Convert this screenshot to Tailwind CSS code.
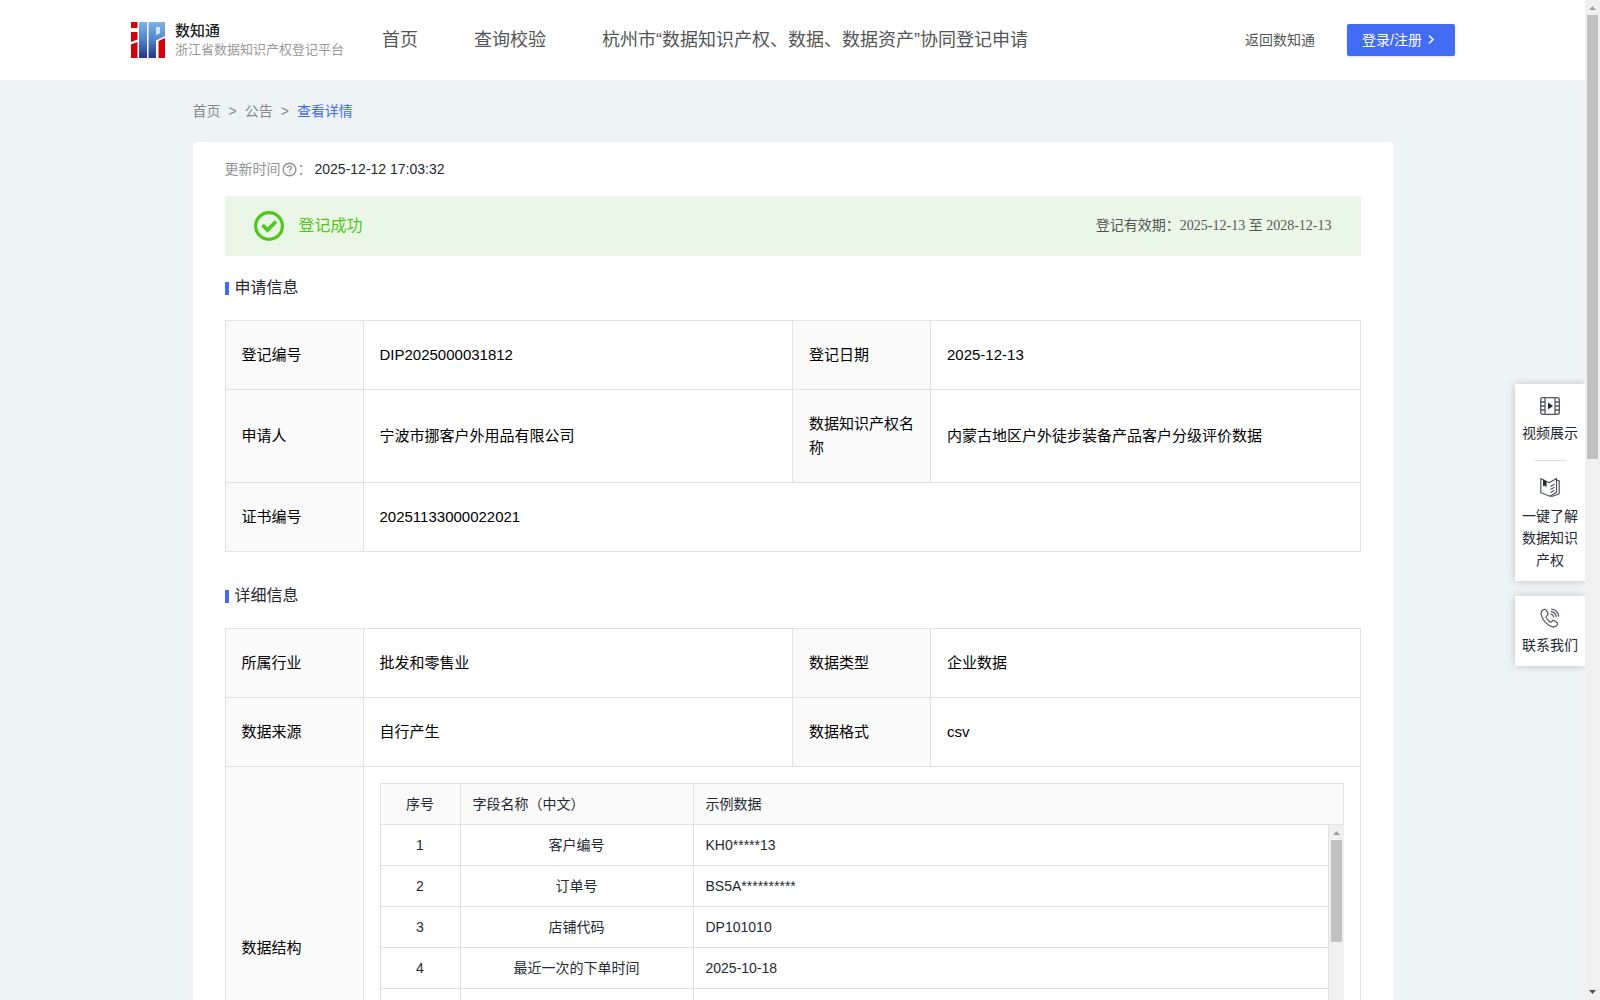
<!DOCTYPE html>
<html lang="zh-CN">
<head>
<meta charset="utf-8"/>
<meta content="width=device-width, initial-scale=1.0" name="viewport"/>
<title>数知通 - 查看详情</title>
<script src="https://cdn.jsdelivr.net/npm/@tailwindcss/browser@4"></script>
</head>
<body class="flex h-screen overflow-hidden bg-[#eef3f6] font-['Liberation_Sans','Noto_Sans_CJK_SC',sans-serif] text-sm text-[#252933]">

<div class="relative min-w-0 flex-1 overflow-hidden">
  <!-- Header -->
  <header class="flex h-20 items-center bg-white pr-[130px] pl-[131px] text-[#555]">
    <a href="#" class="flex items-center gap-2.5">
      <svg class="h-9 w-[34px]" viewBox="0 0 34 36">
        <defs>
          <linearGradient id="blue" x1="0" y1="0" x2="0" y2="1">
            <stop offset="0" stop-color="#7fb2e8"/>
            <stop offset=".5" stop-color="#4f82c6"/>
            <stop offset="1" stop-color="#23348a"/>
          </linearGradient>
          <linearGradient id="bowl" x1="0" y1="0" x2="0" y2="1">
            <stop offset="0" stop-color="#7fb2e8"/>
            <stop offset="1" stop-color="#5585c8"/>
          </linearGradient>
        </defs>
        <path d="M0 0h6.500v6H0zM0 10h6.500v7.500L0 20zM0 22.500l6.500-2.500v16H0zM27.500 19l6.500-3v20h-6.500z" fill="#d0000d"/>
        <path d="M8 0h8v36H8zM17.500 0H25v36h-7.500z" fill="url(#blue)"/>
        <path d="M24 0h10v14l-10 5v-6l5-2V5h-5z" fill="url(#bowl)"/>
        <path d="M25 5h4v6l-4 2z" fill="#d6e5f6"/>
      </svg>
      <span class="flex flex-col">
        <span class="text-[15px] leading-5 font-medium text-[#222]">数知通</span>
        <span class="text-[13px] leading-[18px] text-[#999]">浙江省数据知识产权登记平台</span>
      </span>
    </a>
    <nav class="ml-[38px] flex flex-1 gap-14 text-lg whitespace-nowrap">
      <a href="#">首页</a>
      <a href="#">查询校验</a>
      <a href="#">杭州市“数据知识产权、数据、数据资产”协同登记申请</a>
    </nav>
    <a href="#" class="mr-8 whitespace-nowrap">返回数知通</a>
    <button class="flex h-8 w-[108px] items-center gap-1 rounded-xs bg-[#436cf6] pl-[15px] whitespace-nowrap text-white shadow-sm">
      登录/注册
      <svg class="size-3" viewBox="0 0 12 12" fill="none" stroke="currentColor" stroke-width="1.500"><path d="M3 1.500l4 4-4 4"/></svg>
    </button>
  </header>

  <main class="mx-auto max-w-[1200px]">
    <!-- Breadcrumb -->
    <nav class="flex h-[62px] items-center gap-2 text-[#888]">
      <a href="#">首页</a><span>&gt;</span><a href="#">公告</a><span>&gt;</span><a href="#" class="text-[#436cf6]">查看详情</a>
    </nav>

    <div class="rounded-sm bg-white px-8 pb-8">
      <div class="flex h-[54px] items-center">
        <span class="text-[#909399]">更新时间</span>
        <svg class="mx-px size-[15px]" viewBox="0 0 15 15" fill="none" stroke="#909399"><circle cx="7.500" cy="7.500" r="6.300" stroke-width="1.400"/><path d="M5.600 6.100c0-2.700 3.900-2.500 3.900-.2 0 1.400-1.900 1.400-1.900 3M7.600 10v1.300" stroke-width="1.400"/></svg>
        <span class="text-[#909399]">：</span>
        <span class="ml-[3px]">2025-12-12 17:03:32</span>
      </div>

      <!-- Status banner -->
      <div class="flex h-15 items-center bg-[#ebf7e6] px-[29px]">
        <svg class="size-[30px]" viewBox="0 0 30 30" fill="none" stroke="#4fc71d"><circle cx="15" cy="15" r="13.400" stroke-width="3.200"/><path d="M8.500 14l5 5 8.500-8.500" stroke-width="3.800"/></svg>
        <span class="ml-[15px] text-base text-[#52c41a]">登记成功</span>
        <span class="ml-auto font-['Liberation_Serif','Noto_Sans_CJK_SC',serif] text-[#555]">登记有效期：2025-12-13 至 2028-12-13</span>
      </div>

      <h2 class="mt-5 mb-5 flex items-center gap-1.5 text-base leading-6"><i class="h-[13px] w-1 bg-[#436cf6]"></i>申请信息</h2>
      <table class="w-full table-fixed border-collapse text-[15px] leading-6 text-black [&_td]:border [&_td]:border-[#e1e1e1] [&_td]:px-4 [&_td]:py-[22px] [&_th]:border [&_th]:border-[#e1e1e1] [&_th]:bg-[#fafafa] [&_th]:px-4 [&_th]:py-[22px] [&_th]:text-left [&_th]:font-normal">
        <colgroup><col class="w-[138px]"/><col/><col class="w-[138px]"/><col/></colgroup>
        <tbody>
          <tr><th>登记编号</th><td>DIP2025000031812</td><th>登记日期</th><td>2025-12-13</td></tr>
          <tr><th>申请人</th><td>宁波市挪客户外用品有限公司</td><th>数据知识产权名称</th><td>内蒙古地区户外徒步装备产品客户分级评价数据</td></tr>
          <tr><th>证书编号</th><td colspan="3">20251133000022021</td></tr>
        </tbody>
      </table>

      <h2 class="mt-8 mb-5 flex items-center gap-1.5 text-base leading-6"><i class="h-[13px] w-1 bg-[#436cf6]"></i>详细信息</h2>
      <table class="w-full table-fixed border-collapse text-[15px] leading-6 text-black">
        <colgroup><col class="w-[138px]"/><col/><col class="w-[138px]"/><col/></colgroup>
        <tbody>
          <tr>
            <th class="border border-[#e1e1e1] bg-[#fafafa] px-4 py-[22px] text-left font-normal">所属行业</th>
            <td class="border border-[#e1e1e1] px-4 py-[22px]">批发和零售业</td>
            <th class="border border-[#e1e1e1] bg-[#fafafa] px-4 py-[22px] text-left font-normal">数据类型</th>
            <td class="border border-[#e1e1e1] px-4 py-[22px]">企业数据</td>
          </tr>
          <tr>
            <th class="border border-[#e1e1e1] bg-[#fafafa] px-4 py-[22px] text-left font-normal">数据来源</th>
            <td class="border border-[#e1e1e1] px-4 py-[22px]">自行产生</td>
            <th class="border border-[#e1e1e1] bg-[#fafafa] px-4 py-[22px] text-left font-normal">数据格式</th>
            <td class="border border-[#e1e1e1] px-4 py-[22px]">csv</td>
          </tr>
          <tr>
            <th class="border border-[#e1e1e1] bg-[#fafafa] px-4 text-left font-normal">数据结构</th>
            <td colspan="3" class="border border-[#e1e1e1] p-4">
              <div class="border-l border-[#e1e1e1] text-sm text-[#252933]">
                <table class="w-full table-fixed border-separate border-spacing-0 border-t border-[#e1e1e1] bg-[#fafafa]">
                  <colgroup><col class="w-20"/><col class="w-[233px]"/><col/></colgroup>
                  <thead>
                    <tr class="h-[41px] text-left [&_th]:border-r [&_th]:border-b [&_th]:border-[#e1e1e1] [&_th]:px-3 [&_th]:font-normal">
                      <th class="text-center">序号</th><th>字段名称（中文）</th><th>示例数据</th>
                    </tr>
                  </thead>
                </table>
                <div class="flex h-72 overflow-hidden">
                  <table class="min-w-0 flex-1 table-fixed border-separate border-spacing-0 self-start text-center [&_td]:h-[41px] [&_td]:border-r [&_td]:border-b [&_td]:border-[#e1e1e1] [&_td]:px-3 [&_td:last-child]:text-left">
                    <colgroup><col class="w-20"/><col class="w-[233px]"/><col/></colgroup>
                    <tbody>
                      <tr><td>1</td><td>客户编号</td><td>KH0*****13</td></tr>
                      <tr><td>2</td><td>订单号</td><td>BS5A**********</td></tr>
                      <tr><td>3</td><td>店铺代码</td><td>DP101010</td></tr>
                      <tr><td>4</td><td>最近一次的下单时间</td><td>2025-10-18</td></tr>
                      <tr><td></td><td></td><td></td></tr>
                      <tr><td></td><td></td><td></td></tr>
                      <tr><td></td><td></td><td></td></tr>
                      <tr><td></td><td></td><td></td></tr>
                    </tbody>
                  </table>
                  <div class="flex w-[15px] flex-col items-center bg-[#f0f0f0]">
                    <svg class="h-[15px] w-[15px]" viewBox="0 0 15 15"><path d="M4 10l3.500-4 3.500 4z" fill="#a0a0a0"/></svg>
                    <div class="h-[102px] w-[11px] bg-[#c1c1c1]"></div>
                  </div>
                </div>
              </div>
            </td>
          </tr>
        </tbody>
      </table>
    </div>
  </main>

  <!-- Floating side panel -->
  <aside class="absolute top-96 right-0 flex w-[70px] flex-col gap-[15px] text-center leading-[22px]">
    <div class="flex flex-col items-center bg-white pt-3 pb-2.5 shadow-[0_0_8px_rgba(0,0,0,0.2)]">
      <a href="#" class="flex flex-col items-center gap-1.5">
        <svg class="size-5" viewBox="0 0 20 20" fill="none" stroke="#54565e" stroke-width="1.300"><rect x=".7" y="1.700" width="18.600" height="16.600" rx="2"/><path d="M5 1.700v16.600M15 1.700v16.600M.7 6H5M.7 10H5M.7 14H5M15 6h4.300M15 10h4.300M15 14h4.300"/><path d="M8 6.500v7l5-3.500z" fill="#252933" stroke="none"/></svg>
        视频展示
      </a>
      <i class="my-4 h-px w-8 bg-[#ddd]"></i>
      <a href="#" class="flex flex-col items-center gap-2 px-[7px]">
        <svg class="size-5" viewBox="0 0 20 20" fill="none" stroke="#54565e" stroke-width="1.200" stroke-linejoin="round"><path d="M.8 1.500L9 5.800 16.500 1.500v13.700L10 19.200.8 15.700z"/><path d="M16.500 3.200l2.700.6v13l-6.700 2.400-2.500 0M10.500 9.500l4-2.300M10.500 12.500l4-2.300M10.500 15.500l4-2.300"/><path d="M3 2.500l3.500 1.800v6.200L4.700 8.600 3 9.200z" fill="#252933" stroke="none"/></svg>
        一键了解数据知识产权
      </a>
    </div>
    <a href="#" class="flex flex-col items-center gap-1.5 bg-white pt-3 pb-2.5 shadow-[0_0_8px_rgba(0,0,0,0.2)]">
      <svg class="size-5" viewBox="0 0 20 20" fill="none" stroke="#54565e" stroke-width="1.200" stroke-linecap="round" stroke-linejoin="round"><path d="M3.200 1.800C1.300 3 .7 4.600 1.100 6.500c1 5.200 6 11 11.500 12.300 2 .5 3.700-.2 4.900-2.300.4-.8.200-1.400-.5-1.900l-2.800-1.900c-.8-.5-1.600-.4-2.100.4-.9 1.300-1.800 1.200-3 .1-1.300-1.100-2.300-2.300-2.900-3.800-.4-1 .1-1.500.9-2 1-.6 1.200-1.300.7-2.300L6.200 2.300c-.7-1.200-1.700-1.300-3-.5z"/><path d="M11 6.200c1.500.3 2.400 1.300 2.700 2.800M11.300 3.600c2.800.4 4.500 2.200 4.900 5M11.500 1.100c4 .4 6.600 3 7.200 7"/></svg>
      联系我们
    </a>
  </aside>
</div>

<!-- Page scrollbar -->
<div class="flex w-[15px] flex-col items-center bg-[#f0f0f0]">
  <svg class="h-[15px] w-[15px]" viewBox="0 0 15 15"><path d="M4 10l3.500-4 3.500 4z" fill="#a0a0a0"/></svg>
  <div class="h-[444px] w-[11px] bg-[#c1c1c1]"></div>
  <svg class="mt-auto h-[15px] w-[15px]" viewBox="0 0 15 15"><path d="M4 5l3.500 4L11 5z" fill="#505050"/></svg>
</div>
</body>
</html>
